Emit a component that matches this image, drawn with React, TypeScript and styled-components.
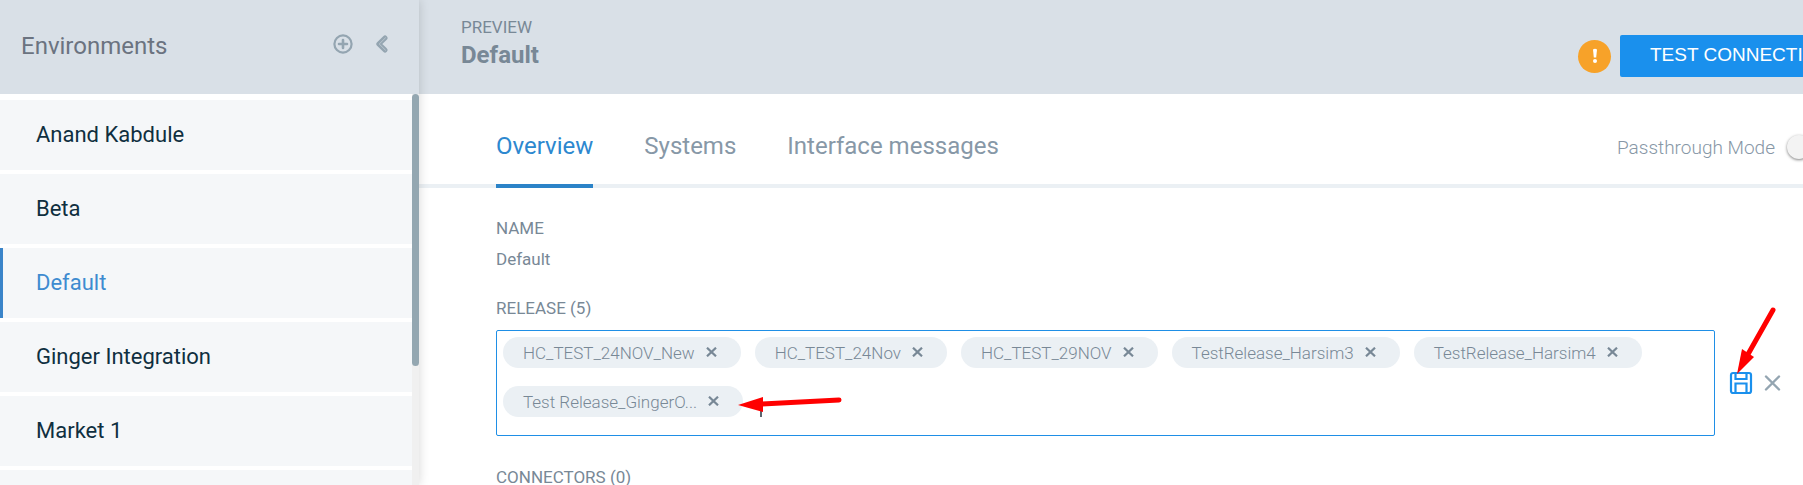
import React, { useState } from "react";
import styled, { createGlobalStyle } from "styled-components";

const GlobalStyle = createGlobalStyle`
  *, *::before, *::after { box-sizing: border-box; }
  html, body, #root { height: 100%; }
  body {
    margin: 0;
    overflow: hidden;
    background: #fff;
    color: #788896;
    font-family: Roboto, "Liberation Sans", sans-serif;
  }
  button, input { font: inherit; color: inherit; }
  h1, h2, h3, p, ul { margin: 0; padding: 0; }
`;

const Page = styled.div`
  display: grid;
  grid-template-columns: 419px minmax(0, 1fr);
  height: 100%;
`;

const Sidebar = styled.aside`
  display: flex;
  flex-direction: column;
  min-height: 0;
  z-index: 1;
  background: #fff;
  box-shadow: 0 0 10px rgba(0, 0, 0, 0.16);
`;

const SidebarHeader = styled.header`
  display: flex;
  flex: none;
  align-items: center;
  height: 94px;
  padding: 0 30px 2px 21px;
  background: #d9e0e7;
`;

const SidebarTitle = styled.h2`
  flex: 1;
  color: #6b7380;
  font-size: 24px;
  font-weight: 400;
  line-height: 28px;
`;

const IconButton = styled.button`
  display: flex;
  padding: 0;
  border: 0;
  background: none;
  color: #94a5b1;
  cursor: pointer;
`;

const HeaderIcons = styled.div`
  display: flex;
  align-items: center;
  gap: 22px;
  padding-bottom: 4px;
`;

const ListArea = styled.div`
  display: flex;
  flex: 1;
  min-height: 0;
`;

const EnvironmentList = styled.ul`
  display: flex;
  flex: 1;
  flex-direction: column;
  gap: 4px;
  padding-top: 6px;
  overflow: hidden;
  list-style: none;
`;

const EnvironmentLink = styled.a<{ $active?: boolean }>`
  display: flex;
  align-items: center;
  height: 70px;
  padding-left: 33px;
  border-left: 3px solid ${(p) => (p.$active ? "#3a84c9" : "#f5f7f9")};
  background: #f5f7f9;
  color: ${(p) => (p.$active ? "#3e8bd0" : "#0f2f40")};
  font-size: 22px;
  line-height: 26px;
  text-decoration: none;
`;

const EmptyRow = styled.li`
  flex: none;
  height: 70px;
  background: #f5f7f9;
`;

const ScrollTrack = styled.div`
  width: 7px;
  background: #f0f0f0;
`;

const ScrollThumb = styled.div`
  height: 272px;
  border-radius: 4px;
  background: #94a7b1;
`;

const Main = styled.main`
  min-width: 0;
  overflow: hidden;
`;

/* The work area keeps running past the window's right edge. */
const WorkArea = styled.div`
  width: calc(100% + 60px);
`;

const TopBar = styled.header`
  display: flex;
  align-items: center;
  justify-content: space-between;
  height: 94px;
  padding-left: 42px;
  background: #d9e0e7;
`;

const TitleBlock = styled.div`
  align-self: flex-start;
  padding-top: 17px;
`;

const Overline = styled.p`
  font-size: 17px;
  line-height: 20px;
`;

const PageTitle = styled.h1`
  font-size: 24px;
  font-weight: 700;
  line-height: 36px;
`;

const TopActions = styled.div`
  display: flex;
  flex: none;
  align-items: center;
  gap: 9px;
  padding-top: 18px;
`;

const WarningBadge = styled.span`
  display: flex;
  align-items: center;
  justify-content: center;
  width: 33px;
  height: 33px;
  border-radius: 50%;
  background: #f7a229;
`;

const TestButton = styled.button`
  width: 243px;
  height: 42px;
  padding: 0 30px 2px;
  border: 0;
  border-radius: 2px;
  background: #1a90ed;
  color: #fff;
  font-family: "Liberation Sans", Arial, sans-serif;
  font-size: 19px;
  text-align: left;
  white-space: nowrap;
`;

const TabBar = styled.nav`
  display: flex;
  justify-content: space-between;
  height: 94px;
  padding: 0 36px 0 77px;
  border-bottom: 4px solid #ebf0f4;
`;

const Tabs = styled.div`
  display: flex;
  gap: 51px;
`;

const Tab = styled.a<{ $active?: boolean }>`
  height: 94px;
  padding-top: 38px;
  border-bottom: 4px solid ${(p) => (p.$active ? "#2b83c8" : "transparent")};
  color: ${(p) => (p.$active ? "#2d88cf" : "#8798a7")};
  font-size: 24px;
  line-height: 28px;
  text-decoration: none;
`;

const SwitchLabel = styled.label`
  display: flex;
  align-items: center;
  gap: 12px;
  padding-top: 16px;
  color: #8797a6;
  font-size: 19px;
  font-weight: 300;
`;

const Switch = styled.input`
  appearance: none;
  display: flex;
  align-items: center;
  width: 40px;
  height: 24px;
  margin: 0;
  background: linear-gradient(#c9ced3, #c9ced3) 20px center / 16px 14px no-repeat;

  &::before {
    content: "";
    width: 24px;
    height: 24px;
    border-radius: 50%;
    background: #f3f3f3;
    box-shadow: 0 1px 3px rgba(0, 0, 0, 0.5);
  }

  &:checked::before { margin-left: 16px; }
`;

const Details = styled.section`
  padding: 30px 82px 0 77px;
`;

const FieldLabel = styled.h3`
  font-size: 17px;
  font-weight: 400;
  line-height: 20px;
`;

const FieldValue = styled.p`
  padding: 11px 0 29px;
  font-size: 17px;
  line-height: 20px;
`;

const EditRow = styled.div`
  display: flex;
  align-items: center;
  gap: 14px;
  padding: 12px 0 31px;
`;

const ReleaseBox = styled.div`
  display: flex;
  flex: 1;
  flex-wrap: wrap;
  align-content: flex-start;
  gap: 18px 14px;
  min-height: 106px;
  padding: 6px;
  border: 1px solid #1f8fe6;
  border-radius: 2px;
`;

const Chip = styled.span`
  position: relative;
  display: flex;
  align-items: center;
  gap: 11px;
  height: 31px;
  padding: 0 24px 0 20px;
  border-radius: 16px;
  background: #ebf0f4;
  font-size: 17px;
  font-weight: 300;
  line-height: 20px;
  white-space: nowrap;
`;

const ChipRemove = styled(IconButton)`
  color: #788896;
  padding-bottom: 2px;
`;

const Entry = styled.label`
  display: flex;
  flex: 1;
  align-items: flex-end;
  min-width: 80px;
  height: 31px;
`;

const Caret = styled.span`
  width: 2px;
  height: 18px;
  margin-left: 3px;
  background: #5c6670;
`;

const EntryInput = styled.input`
  flex: 1;
  min-width: 0;
  height: 31px;
  padding: 0;
  border: 0;
  outline: 0;
  background: none;
`;

const SaveButton = styled(IconButton)`
  position: relative;
  color: #1a90ed;
`;

const PointerToChip = styled.svg`
  position: absolute;
  z-index: 1;
  top: 8px;
  left: calc(100% - 5px);
  pointer-events: none;
`;

const PointerToSave = styled.svg`
  position: absolute;
  bottom: 20px;
  left: 6px;
  pointer-events: none;
`;

const RowActions = styled.div`
  display: flex;
  align-items: center;
  gap: 11px;
`;

const environments = ["Anand Kabdule", "Beta", "Default", "Ginger Integration", "Market 1"];
const releases = [
  "HC_TEST_24NOV_New",
  "HC_TEST_24Nov",
  "HC_TEST_29NOV",
  "TestRelease_Harsim3",
  "TestRelease_Harsim4",
  "Test Release_GingerO...",
];
const tabs = ["Overview", "Systems", "Interface messages"];

const PlusIcon = () => (
  <svg width="20" height="20" viewBox="0 0 20 20" fill="none" stroke="currentColor" strokeWidth="2.2">
    <circle cx="10" cy="10" r="8.6" />
    <path d="M10 6v8M6 10h8" strokeWidth="2.6" strokeLinecap="round" />
  </svg>
);

const CollapseIcon = () => (
  <svg width="14" height="18" viewBox="0 0 14 18" fill="none" strokeLinecap="round" strokeLinejoin="round">
    <path d="M10 3L3.800 9l6.200 6" stroke="currentColor" strokeWidth="5" />
    <path d="M10.500 2.800L4.200 9l6.300 6.200" stroke="#b9c5ce" strokeWidth="1" />
  </svg>
);

const ChipCross = () => (
  <svg width="11" height="10" viewBox="0 0 11 10" fill="none" stroke="currentColor" strokeWidth="2.2">
    <path d="M1 .7l9 8.6M10 .7L1 9.3" />
  </svg>
);

const CloseIcon = () => (
  <svg width="17" height="16" viewBox="0 0 17 16" fill="none" stroke="currentColor" strokeWidth="2.4" strokeLinecap="round">
    <path d="M2 1.5l13 13M15 1.5l-13 13" />
  </svg>
);

const SaveIcon = () => (
  <svg width="24" height="24" viewBox="0 0 24 24" fill="none" stroke="currentColor" strokeWidth="2.2">
    <rect x="2" y="2" width="20" height="20" rx="2" />
    <path d="M6.500 2v6h11V2M6.500 22v-9.500h11V22" />
  </svg>
);

export default function App() {
  const [passthrough, setPassthrough] = useState(false);
  const [entry, setEntry] = useState("");

  return (
    <>
      <GlobalStyle />
      <Page>
        <Sidebar>
          <SidebarHeader>
            <SidebarTitle>Environments</SidebarTitle>
            <HeaderIcons>
              <IconButton aria-label="Add environment"><PlusIcon /></IconButton>
              <IconButton aria-label="Collapse sidebar"><CollapseIcon /></IconButton>
            </HeaderIcons>
          </SidebarHeader>
          <ListArea>
            <EnvironmentList>
              {environments.map((name) => (
                <li key={name}>
                  <EnvironmentLink href="#" $active={name === "Default"}>{name}</EnvironmentLink>
                </li>
              ))}
              <EmptyRow aria-hidden="true" />
            </EnvironmentList>
            <ScrollTrack><ScrollThumb /></ScrollTrack>
          </ListArea>
        </Sidebar>

        <Main>
          <WorkArea>
            <TopBar>
              <TitleBlock>
                <Overline>PREVIEW</Overline>
                <PageTitle>Default</PageTitle>
              </TitleBlock>
              <TopActions>
                <WarningBadge role="img" aria-label="Warning">
                  <svg width="6" height="16" viewBox="0 0 6 16" fill="#fff">
                    <path d="M1 1.500Q3 0 5 1.500L4.200 9.500H1.800Z" />
                    <circle cx="3" cy="13" r="2" />
                  </svg>
                </WarningBadge>
                <TestButton>TEST CONNECTION</TestButton>
              </TopActions>
            </TopBar>

            <TabBar>
              <Tabs>
                {tabs.map((name) => (
                  <Tab key={name} href="#" $active={name === "Overview"}>{name}</Tab>
                ))}
              </Tabs>
              <SwitchLabel>
                Passthrough Mode
                <Switch
                  type="checkbox"
                  role="switch"
                  checked={passthrough}
                  onChange={(e) => setPassthrough(e.target.checked)}
                />
              </SwitchLabel>
            </TabBar>

            <Details>
              <FieldLabel>NAME</FieldLabel>
              <FieldValue>Default</FieldValue>
              <FieldLabel>RELEASE (5)</FieldLabel>
              <EditRow>
                <ReleaseBox>
                  {releases.map((name, i) => (
                    <Chip key={name}>
                      {name}
                      <ChipRemove aria-label={`Remove ${name}`}><ChipCross /></ChipRemove>
                      {i === releases.length - 1 && (
                        <PointerToChip width="104" height="20" viewBox="0 0 104 20" aria-hidden="true">
                          <path d="M22 10L101 6" stroke="#f00" strokeWidth="5" strokeLinecap="round" />
                          <path d="M0 11L25 3V18Z" fill="#f00" />
                        </PointerToChip>
                      )}
                    </Chip>
                  ))}
                  <Entry>
                    <Caret />
                    <EntryInput aria-label="Add release" value={entry} onChange={(e) => setEntry(e.target.value)} />
                  </Entry>
                </ReleaseBox>
                <RowActions>
                  <SaveButton aria-label="Save">
                    <SaveIcon />
                    <PointerToSave width="44" height="70" viewBox="0 0 44 70" aria-hidden="true">
                      <path d="M38 5L12 51" stroke="#f00" strokeWidth="5" strokeLinecap="round" />
                      <path d="M2 69L7 44L19 52Z" fill="#f00" />
                    </PointerToSave>
                  </SaveButton>
                  <IconButton aria-label="Cancel"><CloseIcon /></IconButton>
                </RowActions>
              </EditRow>
              <FieldLabel>CONNECTORS (0)</FieldLabel>
            </Details>
          </WorkArea>
        </Main>
      </Page>
    </>
  );
}
